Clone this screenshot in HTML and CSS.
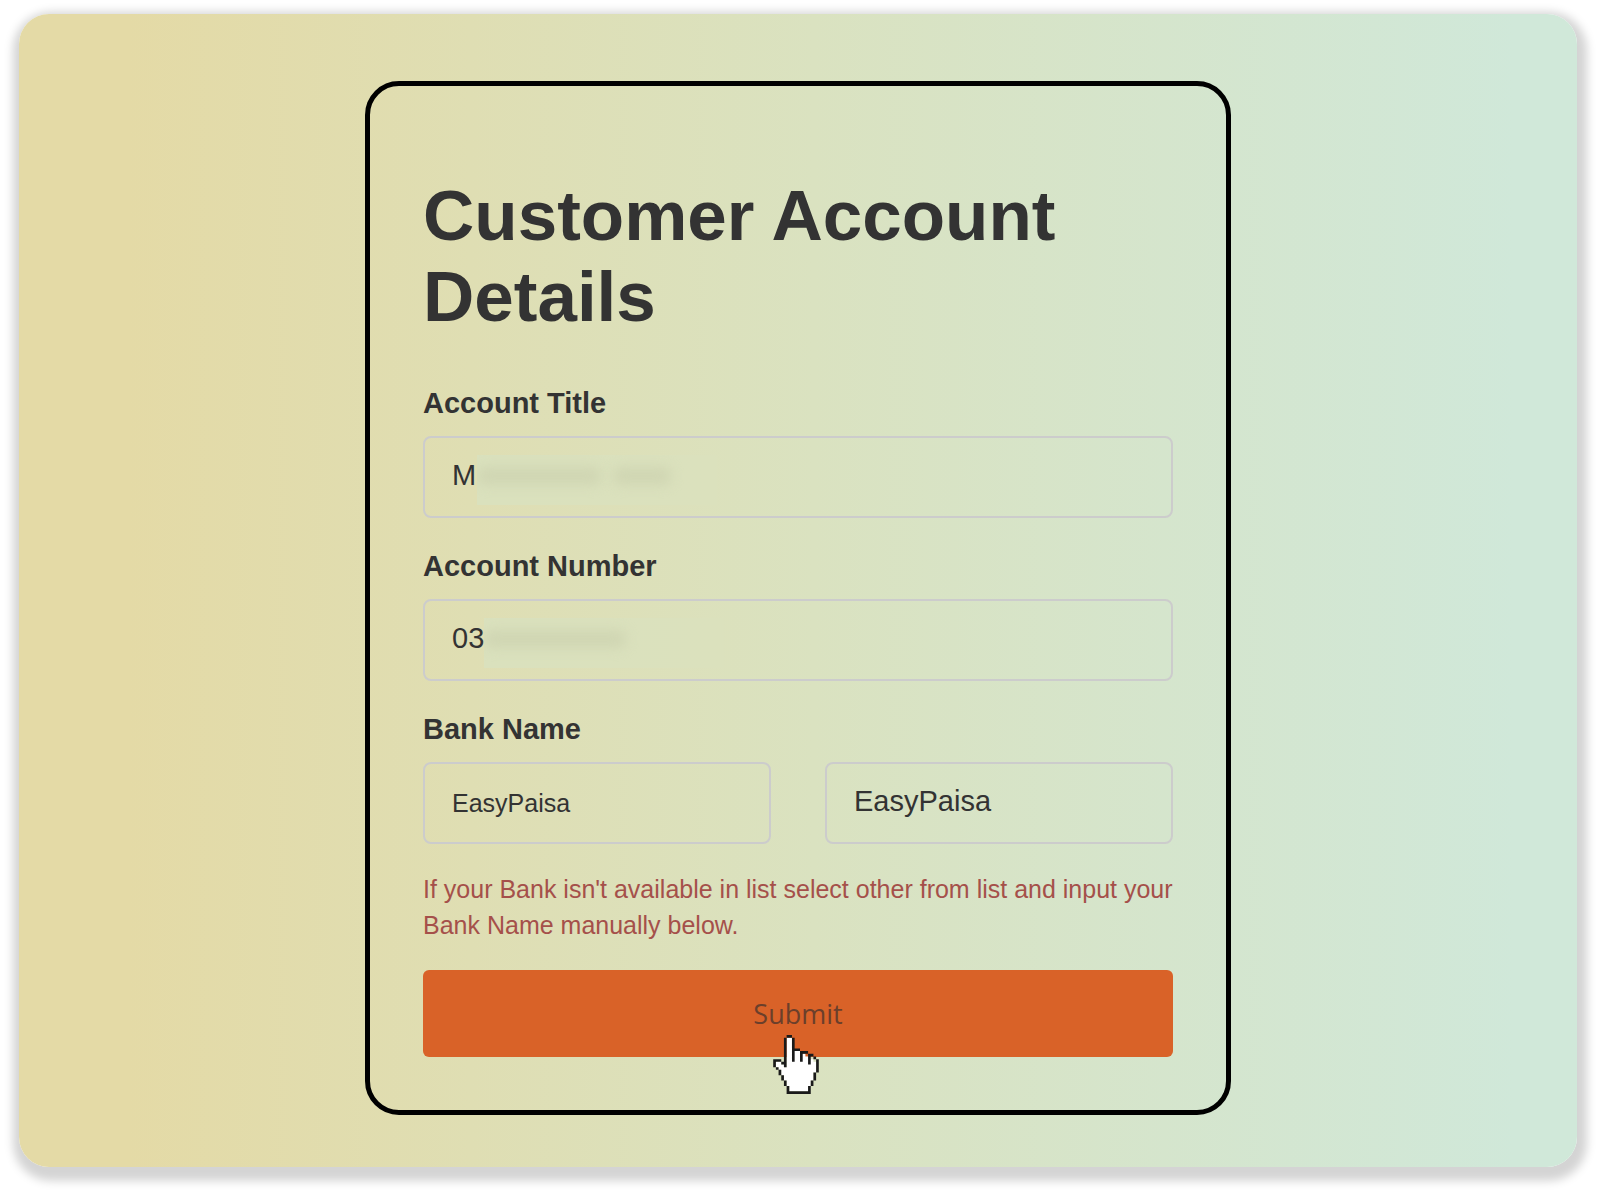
FILE: index.html
```
<!DOCTYPE html>
<html lang="en">
<head>
    <meta charset="UTF-8">
    <meta name="viewport" content="width=device-width, initial-scale=1.0">
    <title>Customer Account Details</title>
    <link rel="stylesheet" href="styles.css">
</head>
<body>
    <main class="panel">
        <form class="card">
            <h1>Customer Account Details</h1>

            <label for="accountTitle">Account Title</label>
            <div class="field">
                <input type="text" id="accountTitle" value="M">
                <!-- Hides the rest of the name -->
                <div class="redacted redacted-title">
                    <span class="smudge smudge-long"></span>
                    <span class="smudge smudge-short"></span>
                </div>
            </div>

            <label for="accountNumber">Account Number</label>
            <div class="field">
                <input type="text" id="accountNumber" value="03">
                <!-- Hides the rest of the number -->
                <div class="redacted redacted-number">
                    <span class="smudge smudge-long"></span>
                </div>
            </div>

            <label for="bankName">Bank Name</label>
            <div class="bank-row">
                <select id="bankName">
                    <option selected>EasyPaisa</option>
                    <option>Other</option>
                </select>
                <input type="text" id="bankManual" value="EasyPaisa" aria-label="Bank Name (manual)">
            </div>

            <p class="note">If your Bank isn't available in list select other from list and input your Bank Name manually below.</p>

            <div class="submit-row">
                <button type="button">Submit</button>
                <svg class="pointer" viewBox="0 0 17 22" aria-hidden="true">
                    <path d="M5 1H7V6H10V7H12V8H14V9H15V10H16V14H15V17H14V19H13V21H6V19H5V17H4V15H3V13H2V12H1V10H3V11H4V12H5Z" fill="#fff"/>
                    <path d="M5 0H7V1H5ZM4 1H5V12H4V11H3V10H4ZM7 1H8V10H7ZM8 5H10V6H8ZM10 6H11V10H10ZM11 6H13V7H11ZM13 7H14V11H13ZM14 7H15V8H14ZM15 8H16V9H15ZM16 9H17V14H16ZM15 14H16V17H15ZM14 17H15V19H14ZM13 19H14V22H5V19H6V21H13ZM4 17H5V19H4ZM3 15H4V17H3ZM2 13H3V15H2ZM1 12H2V13H1ZM0 9H3V10H1V12H0Z" fill="#1a1a1a"/>
                </svg>
            </div>
        </form>
    </main>
</body>
</html>
```
FILE: styles.css
```
* {
    box-sizing: border-box;
}
body {
    margin: 0;
    padding: 14px 23px 29px 19px;
    background-color: #fff;
    font-family: "Liberation Sans", Arial, sans-serif;
    color: #333;
}
/* Gradient backdrop */
.panel {
    padding: 67px 20px 52px;
    border-radius: 30px;
    background: linear-gradient(to right, #e4daa6 7%, #dae2c0 51%, #d0e8d9 96%);
    box-shadow: 2px 6px 10px 8px #d4d4d4;
}
.card {
    max-width: 866px;
    margin: 0 auto;
    padding: 53px;
    border: 5px solid #000;
    border-radius: 34px;
}
h1 {
    margin: 36px 0 50px;
    font-size: 71px;
    line-height: 81px;
}
label {
    display: block;
    margin-bottom: 16px;
    font-size: 29px;
    font-weight: bold;
    line-height: 33px;
}
input,
select {
    display: block;
    width: 100%;
    height: 82px;
    padding: 0 27px;
    border: 2px solid #ccc;
    border-radius: 8px;
    background: transparent;
    color: #333;
    font-family: inherit;
    font-size: 29px;
    outline: none;
}
input {
    padding-bottom: 3px;
}
select {
    appearance: none;
    font-size: 25px;
}
.field {
    position: relative;
    margin-bottom: 32px;
}
/* Patch that lies over the private part of a value */
.redacted {
    position: absolute;
    top: 19px;
    display: flex;
    align-items: center;
    gap: 12px;
    width: 240px;
    height: 50px;
    padding-bottom: 8px;
    background: linear-gradient(to right, #dae1bd, #dbe1bd);
    overflow: hidden;
}
.redacted-title {
    left: 54px;
}
.redacted-number {
    left: 61px;
}
.smudge {
    height: 18px;
    border-radius: 8px;
    background-color: #d0d6b3;
    filter: blur(6px);
}
.smudge-long {
    width: 124px;
}
.smudge-short {
    width: 58px;
}
.redacted-number .smudge-long {
    width: 142px;
}
.bank-row {
    display: grid;
    grid-template-columns: 1fr 1fr;
    gap: 54px;
}
.note {
    margin: 27px 0;
    color: #a5504a;
    font-size: 25px;
    line-height: 36px;
}
.submit-row {
    position: relative;
}
button {
    display: block;
    width: 100%;
    height: 87px;
    padding: 0;
    border: none;
    border-radius: 6px;
    background-color: #d96228;
    color: #6b3f2b;
    font-family: "Open Sans", "Noto Sans", sans-serif;
    font-size: 27px;
    cursor: pointer;
}
/* Hand cursor over the button */
.pointer {
    position: absolute;
    top: 65px;
    left: calc(50% - 25px);
    width: 46px;
    height: 59px;
}
```
